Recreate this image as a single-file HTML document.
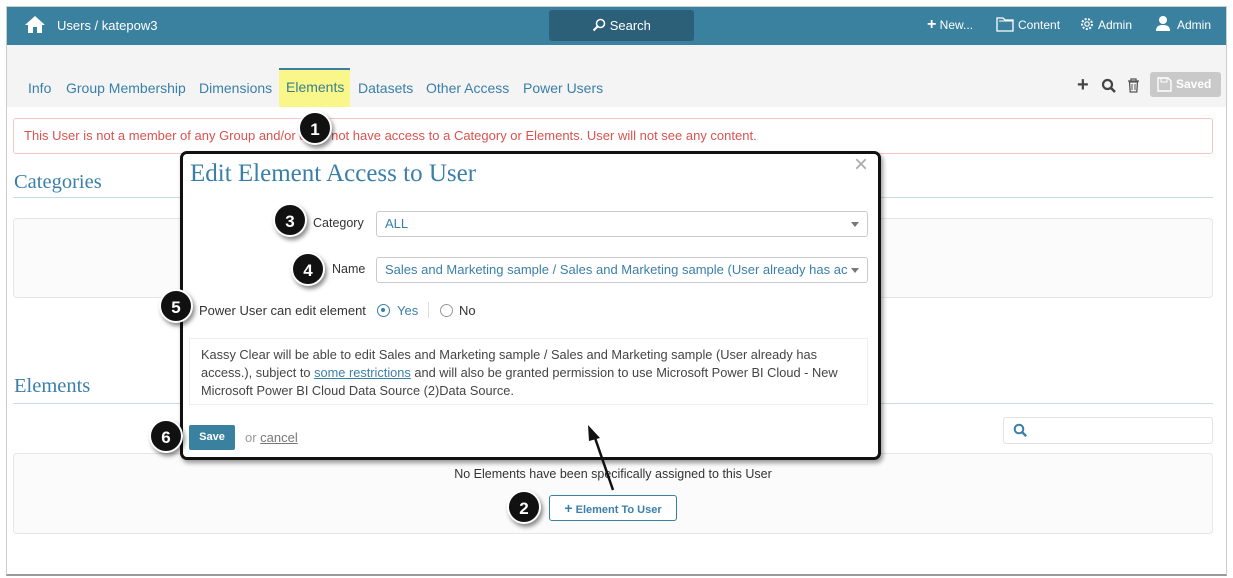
<!DOCTYPE html>
<html><head><style>
*{box-sizing:border-box;margin:0;padding:0}
body{width:1233px;height:578px;background:#fff;font-family:"Liberation Sans",sans-serif;position:relative;overflow:hidden;font-size:13px;color:#333}
.a{position:absolute}
.frame{left:6px;top:6px;width:1221px;height:570px;border:1px solid #ccc;border-bottom:2px solid #999}
.hdr{left:7px;top:7px;width:1219px;height:38px;background:#3a809f;color:#fff}
.tabs{left:7px;top:45px;width:1219px;height:62px;background:#f4f4f4}
.tab{top:80px;color:#3a7fa9;font-size:14px}
.badge{width:34px;height:34px;border-radius:50%;background:#111;color:#fff;font-weight:bold;font-size:17px;text-align:center;line-height:34px;border:2px solid #fff;box-shadow:2px 3px 4px rgba(0,0,0,.45)}
.serif{font-family:"Liberation Serif",serif;color:#3a7fa9}
.sel{border:1px solid #ccc;border-radius:3px;background:#fff;color:#3a7fa9;font-size:13px;padding:0 8px;line-height:24px;height:26px}
.car{right:8px;top:10px;width:0;height:0;border-left:4px solid transparent;border-right:4px solid transparent;border-top:5px solid #777}
</style></head><body>
<div class="a frame"></div>
<div class="a hdr">
 <svg class="a" style="left:17px;top:8px" width="22" height="19" viewBox="0 0 22 19"><path d="M11 1 L1 10 L4 10 L4 18 L9 18 L9 12 L13 12 L13 18 L18 18 L18 10 L21 10 Z" fill="#fff"/></svg>
 <div class="a" style="left:50px;top:11px;font-size:13px">Users / katepow3</div>
 <div class="a" style="left:542px;top:3px;width:145px;height:31px;background:#2c5f78;border-radius:3px;text-align:center;line-height:31px;font-size:13px">
  <svg width="14" height="14" viewBox="0 0 14 14" style="vertical-align:-2px"><circle cx="8.5" cy="5.5" r="4" fill="none" stroke="#fff" stroke-width="1.6"/><path d="M5.5 8.5 L1.5 12.5" stroke="#fff" stroke-width="2"/></svg> Search</div>
 <div class="a" style="left:920px;top:11px;font-size:12px"><b style="font-size:16px;line-height:12px">+</b> New...</div>
 <svg class="a" style="left:989px;top:10px" width="18" height="15" viewBox="0 0 18 15"><path d="M1 1h6l2 2h8v11H1z" fill="none" stroke="#fff" stroke-width="1.3"/><path d="M3 4h14" stroke="#fff"/></svg>
 <div class="a" style="left:1011px;top:11px;font-size:12px">Content</div>
 <svg class="a" style="left:1072px;top:9px" width="16" height="16" viewBox="0 0 16 16"><circle cx="8" cy="8" r="5" fill="none" stroke="#fff" stroke-width="2" stroke-dasharray="2 1.5"/><circle cx="8" cy="8" r="2.2" fill="none" stroke="#fff" stroke-width="1.2"/></svg>
 <div class="a" style="left:1091px;top:11px;font-size:12px">Admin</div>
 <svg class="a" style="left:1148px;top:8px" width="16" height="17" viewBox="0 0 16 17"><circle cx="8" cy="5" r="4" fill="#fff"/><path d="M1 16c0-5 3-6 7-6s7 1 7 6z" fill="#fff"/></svg>
 <div class="a" style="left:1170px;top:11px;font-size:12px">Admin</div>
</div>
<div class="a tabs"></div>
<div class="a" style="left:279px;top:68px;width:71px;height:39px;background:#f9f78a;border-top:2px solid #3a809f"></div>
<div class="a tab" style="left:28px">Info</div>
<div class="a tab" style="left:66px">Group Membership</div>
<div class="a tab" style="left:199px">Dimensions</div>
<div class="a tab" style="left:286px;top:79px;color:#3a7f8a">Elements</div>
<div class="a tab" style="left:358px">Datasets</div>
<div class="a tab" style="left:426px">Other Access</div>
<div class="a tab" style="left:523px">Power Users</div>
<div class="a" style="left:1077px;top:74px;font-size:20px;font-weight:bold;color:#444">+</div>
<svg class="a" style="left:1101px;top:78px" width="16" height="16" viewBox="0 0 16 16"><circle cx="6.5" cy="6.5" r="4.5" fill="none" stroke="#444" stroke-width="2.2"/><path d="M10 10l4 4" stroke="#444" stroke-width="2.6"/></svg>
<svg class="a" style="left:1127px;top:78px" width="13" height="15" viewBox="0 0 13 15"><path d="M1 3h11M4 3V1h5v2M2.5 4h8l-.7 10H3.2z" fill="none" stroke="#555" stroke-width="1.3"/><path d="M5 6v6M8 6v6" stroke="#555"/></svg>
<div class="a" style="left:1150px;top:72px;width:71px;height:25px;background:#c9c9c9;border-radius:3px;color:#fff;font-weight:bold;font-size:12px;line-height:25px;padding-left:26px">Saved</div>
<svg class="a" style="left:1157px;top:77px" width="15" height="15" viewBox="0 0 15 15"><path d="M1 1h10l3 3v10H1z" fill="none" stroke="#fff" stroke-width="1.4"/><rect x="4" y="1" width="6" height="4" fill="none" stroke="#fff"/></svg>

<div class="a" style="left:13px;top:118px;width:1200px;height:36px;border:1px solid #f4c6c6;border-radius:3px;color:#d9534f;font-size:13px;line-height:34px;padding-left:10px">This User is not a member of any Group and/or does not have access to a Category or Elements. User will not see any content.</div>

<div class="a serif" style="left:14px;top:171px;font-size:20.5px">Categories</div>
<div class="a" style="left:13px;top:197px;width:1200px;height:1px;background:#c5dbe6"></div>
<div class="a" style="left:13px;top:218px;width:1200px;height:80px;border:1px solid #e6e6e6;border-radius:4px;background:#fbfbfb"></div>
<div class="a serif" style="left:14px;top:375px;font-size:20.5px">Elements</div>
<div class="a" style="left:13px;top:403px;width:1200px;height:1px;background:#c5dbe6"></div>
<div class="a" style="left:1003px;top:417px;width:210px;height:27px;border:1px solid #e2e2e2;border-radius:3px"></div>
<svg class="a" style="left:1013px;top:423px" width="15" height="15" viewBox="0 0 15 15"><circle cx="6" cy="6" r="4.3" fill="none" stroke="#3a7fa9" stroke-width="2"/><path d="M9.2 9.2l4 4" stroke="#3a7fa9" stroke-width="2.4"/></svg>
<div class="a" style="left:13px;top:453px;width:1200px;height:81px;border:1px solid #e6e6e6;border-radius:4px;background:#fbfbfb"></div>
<div class="a" style="left:0;top:467px;width:1226px;text-align:center;font-size:12.5px;color:#333">No Elements have been specifically assigned to this User</div>
<div class="a" style="left:549px;top:495px;width:128px;height:26px;border:1px solid #3a809f;border-radius:3px;background:#fff;color:#3a7fa9;font-size:11px;font-weight:bold;line-height:24px;text-align:center"><span style="font-size:14px">+</span> Element To User</div>

<div class="a" style="left:180px;top:151px;width:701px;height:309px;border:3px solid #111;border-radius:7px;background:#fff;box-shadow:2px 3px 5px rgba(0,0,0,.4)"></div>
<div class="a" style="left:854px;top:151px;font-size:24px;color:#aaa">×</div>
<div class="a serif" style="left:190px;top:160px;font-size:25px">Edit Element Access to User</div>
<div class="a" style="left:313px;top:216px;font-size:12.5px">Category</div>
<div class="a sel" style="left:376px;top:211px;width:492px">ALL<div class="a car"></div></div>
<div class="a" style="left:332px;top:262px;font-size:12.5px">Name</div>
<div class="a sel" style="left:376px;top:257px;width:492px;white-space:nowrap;overflow:hidden;font-size:13px"><div style="width:470px;overflow:hidden">Sales and Marketing sample / Sales and Marketing sample (User already has ac</div><div class="a car"></div></div>
<div class="a" style="left:199px;top:303px;font-size:13px">Power User can edit element</div>
<div class="a" style="left:377px;top:304px;width:13px;height:13px;border:1.5px solid #3a7fa9;border-radius:50%"><div class="a" style="left:3px;top:3px;width:4px;height:4px;border-radius:50%;background:#3a7fa9"></div></div>
<div class="a" style="left:397px;top:303px;font-size:13px;color:#3a7fa9">Yes</div>
<div class="a" style="left:428px;top:302px;width:1px;height:16px;background:#ddd"></div>
<div class="a" style="left:440px;top:304px;width:13px;height:13px;border:1px solid #999;border-radius:50%"></div>
<div class="a" style="left:459px;top:303px;font-size:13px">No</div>
<div class="a" style="left:189px;top:338px;width:679px;height:67px;border:1px solid #eee;padding:7px 11px;font-size:12.8px;line-height:18px;color:#444">Kassy Clear will be able to edit Sales and Marketing sample / Sales and Marketing sample (User already has access.), subject to <u style="color:#3a7fa9">some restrictions</u> and will also be granted permission to use Microsoft Power BI Cloud - New Microsoft Power BI Cloud Data Source (2)Data Source.</div>
<div class="a" style="left:189px;top:425px;width:46px;height:25px;background:#3a809f;border-radius:2px;color:#fff;font-weight:bold;font-size:11px;text-align:center;line-height:25px">Save</div>
<div class="a" style="left:245px;top:430px;font-size:13px;color:#999">or <u style="color:#777">cancel</u></div>

<svg class="a" style="left:0;top:0" width="1233" height="578"><path d="M613 490 L594 435" stroke="#111" stroke-width="2.5"/><path d="M588 425 L600 438 L589 441 Z" fill="#111"/></svg>

<div class="a badge" style="left:298px;top:111px">1</div>
<div class="a badge" style="left:507px;top:490px">2</div>
<div class="a badge" style="left:273px;top:203px">3</div>
<div class="a badge" style="left:291px;top:252px">4</div>
<div class="a badge" style="left:159px;top:289px">5</div>
<div class="a badge" style="left:149px;top:419px">6</div>
</body></html>
